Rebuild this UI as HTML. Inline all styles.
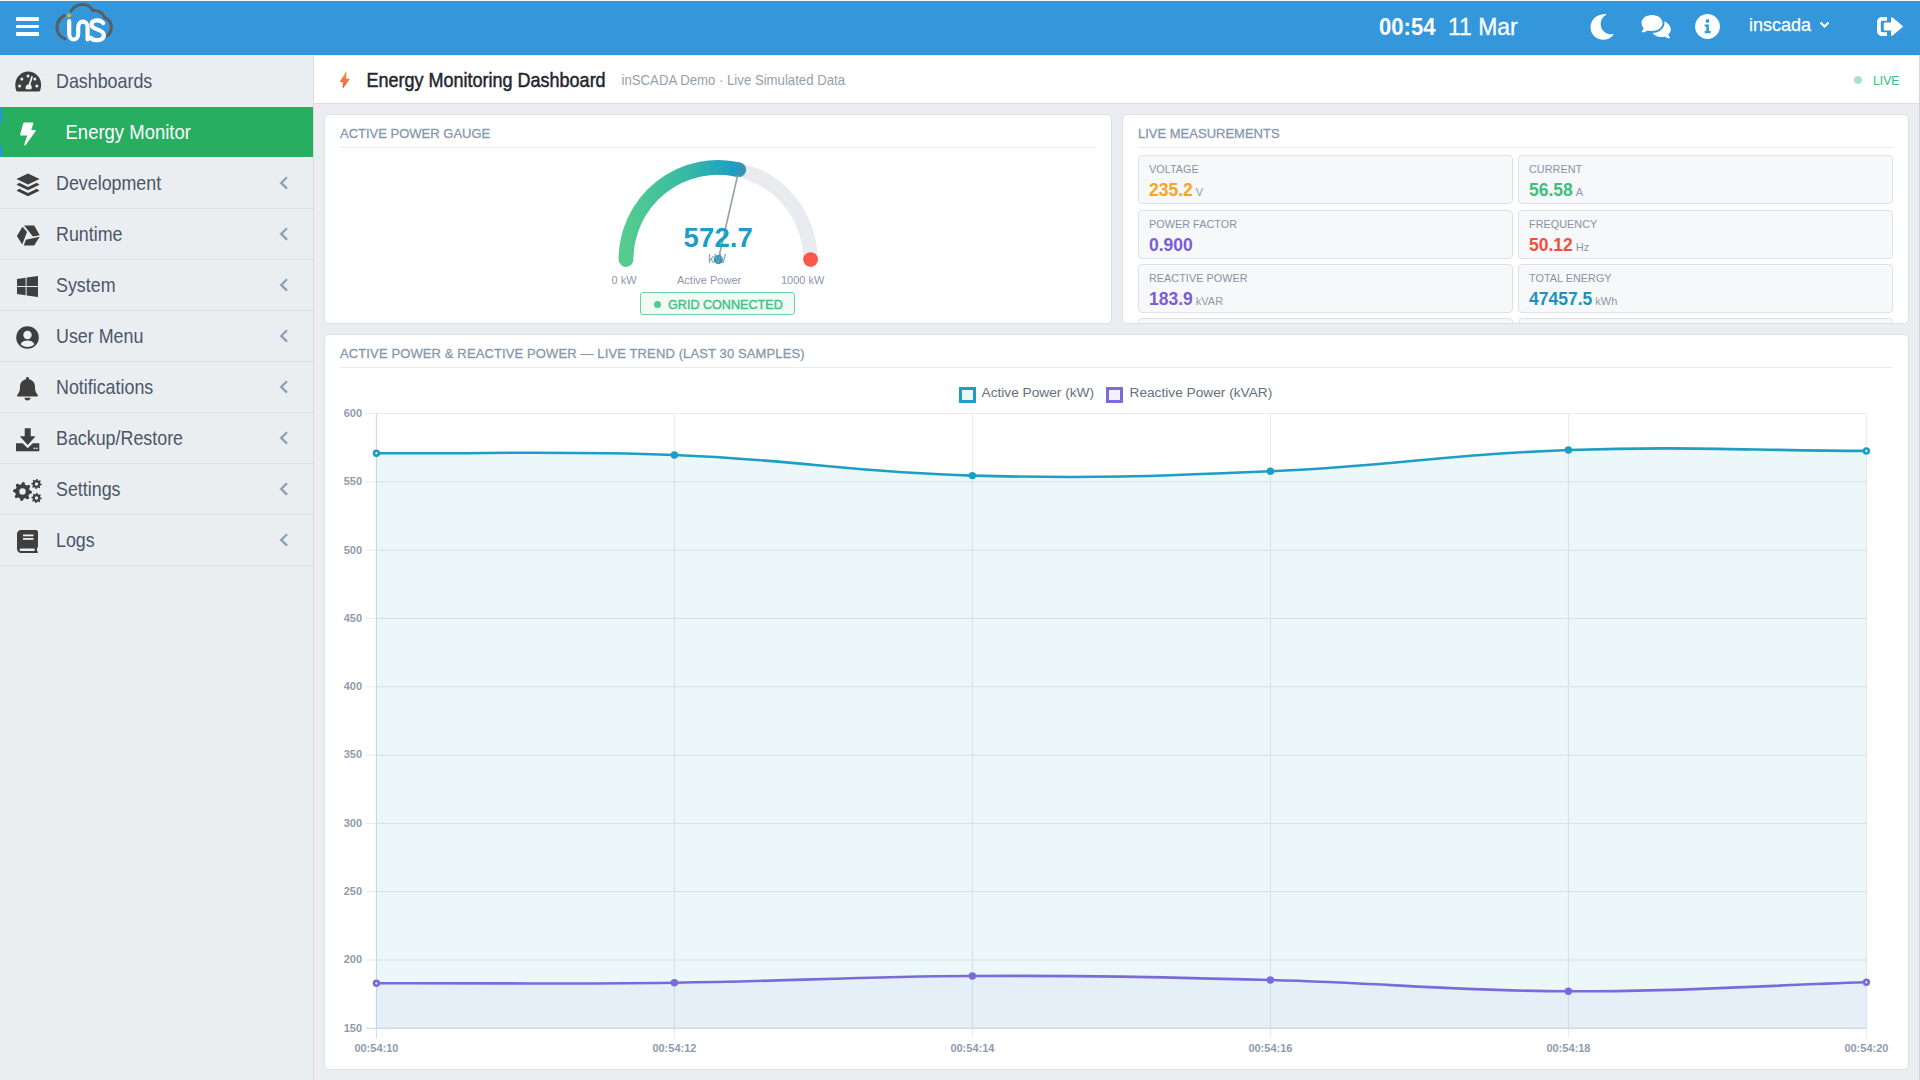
<!DOCTYPE html>
<html><head><meta charset="utf-8"><style>
*{box-sizing:border-box}
html,body{margin:0;padding:0}
body{width:1920px;height:1080px;overflow:hidden;position:relative;background:#ebedf0;font-family:"Liberation Sans",sans-serif}
.abs{position:absolute}
#hdr{position:absolute;left:0;top:1px;width:1920px;height:54px;background:#3597db;border-bottom:1px solid #2891d9}
#topline{position:absolute;left:0;top:0;width:1920px;height:1px;background:#f4f7fa}
#side{position:absolute;left:0;top:55px;width:314px;height:1025px;background:#eaeef1;border-right:1px solid #dadada}
.row{position:absolute;left:0;width:313px}
.row.active{background:#27ae60}
.lbl{position:absolute;font-size:18.5px;color:#4b5668;white-space:nowrap;transform:scale(0.965,1.1);transform-origin:0 32px}
.sep{position:absolute;left:0;width:313px;height:1px;background:#dde1e5}
.chev{position:absolute}
.ico{position:absolute;line-height:0}
#titlebar{position:absolute;left:314px;top:55px;width:1605px;height:49px;background:#fff;border-bottom:1px solid #dadde2}
#rborder{position:absolute;left:1919px;top:55px;width:1px;height:1025px;background:#d3d7dc}
.card{position:absolute;background:#fff;border:1px solid #dde1e6;border-radius:5px;overflow:hidden}
.ctitle{position:absolute;left:15px;font-size:13px;color:#8898ab;-webkit-text-stroke:0.3px #8898ab;white-space:nowrap;letter-spacing:0px}
.cdiv{position:absolute;left:15px;right:15px;height:1px;background:#e8ebef}
.mbox{position:absolute;width:375px;height:49px;background:#f7f8fa;border:1px solid #dde1e6;border-radius:4px}
.mlab{position:absolute;left:10px;top:6.7px;font-size:10.8px;color:#8893a3;white-space:nowrap;letter-spacing:0.05px}
.mval{position:absolute;left:10px;top:22.8px;font-size:17.5px;font-weight:bold;white-space:nowrap;line-height:22px}
.munit{font-size:11px;font-weight:normal;color:#8f99a8;margin-left:3px}
.ax{font-family:"Liberation Sans",sans-serif;font-size:11px;font-weight:bold;fill:#8f9bab}
.wt{position:absolute;color:#fff;white-space:nowrap}
</style></head><body>
<div id="topline"></div>
<div id="hdr"></div>
<!-- hamburger -->
<div class="abs" style="left:16px;top:17px;width:23px;height:3.7px;background:#fff;border-radius:1px"></div>
<div class="abs" style="left:16px;top:24.8px;width:23px;height:3.7px;background:#fff;border-radius:1px"></div>
<div class="abs" style="left:16px;top:32.4px;width:23px;height:3.7px;background:#fff;border-radius:1px"></div>
<!-- logo -->
<svg class="abs" style="left:0;top:0" width="130" height="56" viewBox="0 0 130 56">
 <path d="M64.2 15.6 C58 18.5 55.5 26 57.8 32 C59 35 61.5 37.5 65 38.8" fill="none" stroke="#585d62" stroke-width="3" stroke-linecap="round"/>
 <path d="M71 11 C74 6.5 78.5 4.6 83 4.6 C87.5 4.6 91 7 93 10.6 C98 9.8 103 13 104.8 17.6 C109.5 19.6 111.8 24 111.3 28.5 C111 31.5 109.5 34 107.4 35.6" fill="none" stroke="#585d62" stroke-width="3" stroke-linecap="round"/>
 <circle cx="69" cy="15.6" r="2" fill="#f6b012"/>
 <path d="M69.2 21 V33.5 C69.2 41.5 78.2 41.5 78.2 33.5 V27.5 C78.2 19.8 87.6 19.8 87.6 27.5 V39.5" fill="none" stroke="#fff" stroke-width="4.2" stroke-linecap="round"/>
 <path d="M103.2 23.2 C100.5 19 91.5 19.2 91.5 24.8 C91.5 30.2 103.8 28.6 103.8 35 C103.8 41.2 93.5 41.5 90.5 37.6" fill="none" stroke="#fff" stroke-width="4.2" stroke-linecap="round"/>
</svg>
<div class="wt" style="left:1379px;top:11.6px;font-size:24px;font-weight:bold;line-height:30px;transform:scaleX(0.92);transform-origin:0 0">00:54</div>
<div class="wt" style="left:1448px;top:11.6px;font-size:24px;line-height:30px;-webkit-text-stroke:0.3px #fff;transform:scaleX(0.955);transform-origin:0 0">11 Mar</div>
<!-- moon -->
<svg class="abs" style="left:1590px;top:13.5px" width="25" height="26" viewBox="0 0 25 26"><path d="M13.2 0.2 C6 0.6 0.5 6.4 0.5 13.2 C0.5 20.2 6.3 25.8 13.3 25.8 C17.4 25.8 21 23.9 23.4 21 C23.7 20.6 23.4 20 22.9 20.1 C22.2 20.2 21.6 20.3 20.9 20.3 C15.2 20.3 10.6 15.6 10.6 9.9 C10.6 6 12.7 2.6 15.9 0.9 C16.4 0.6 16.3 -0.1 15.7 -0.1 C14.9 0.1 14 0.1 13.2 0.2Z" fill="#fff"/></svg>
<!-- comments -->
<svg class="abs" style="left:1641px;top:14px" width="31" height="25" viewBox="0 0 31 25"><path d="M11 1 C5 1 0.5 4.6 0.5 9 C0.5 10.9 1.3 12.6 2.7 14 C2.2 15.7 1.2 17 0.8 17.5 C0.6 17.8 0.8 18.2 1.2 18.2 C3.6 18.2 5.5 17.2 6.6 16.4 C8 16.8 9.4 17 11 17 C17 17 21.5 13.4 21.5 9 C21.5 4.6 17 1 11 1Z" fill="#fff"/><path d="M23.3 7.2 C23.4 7.8 23.5 8.4 23.5 9 C23.5 14.6 18 18.8 11.6 19 C13.4 21.4 16.6 23 20.2 23 C21.4 23 22.6 22.8 23.7 22.4 C24.7 23.2 26.4 24.2 28.6 24.2 C29 24.2 29.2 23.8 29 23.5 C28.6 23 27.8 21.9 27.3 20.4 C28.8 19.1 29.8 17.4 29.8 15.5 C29.8 11.9 27.1 8.8 23.3 7.2Z" fill="#fff"/></svg>
<!-- info -->
<svg class="abs" style="left:1695px;top:14.2px" width="25" height="25" viewBox="0 0 25 25"><circle cx="12.5" cy="12.5" r="12.4" fill="#fff"/><circle cx="12.5" cy="6.9" r="1.9" fill="#3597db"/><path d="M9.6 10.4 H13.9 V17 H15.6 V19.2 H9.6 V17 H11.3 V12.6 H9.6Z" fill="#3597db"/></svg>
<div class="wt" style="left:1749px;top:13px;font-size:18px;line-height:24px;-webkit-text-stroke:0.25px #fff">inscada</div>
<svg class="abs" style="left:1819px;top:20.5px" width="11" height="8" viewBox="0 0 11 8"><path d="M1.5 1.5 L5.5 5.5 L9.5 1.5" fill="none" stroke="#fff" stroke-width="2.2"/></svg>
<!-- sign-out -->
<svg class="abs" style="left:1877px;top:17px" width="26" height="19" viewBox="0 0 26 19"><path d="M10 0 H5 C2.2 0 0 2.2 0 5 V14 C0 16.8 2.2 19 5 19 H10 V15.2 H5.2 C4.4 15.2 3.8 14.6 3.8 13.8 V5.2 C3.8 4.4 4.4 3.8 5.2 3.8 H10Z" fill="#fff"/><path d="M15.6 0.4 L25.4 8.7 C25.9 9.1 25.9 9.9 25.4 10.3 L15.6 18.6 C15 19.1 14 18.7 14 17.9 V13.6 H7.8 C7.2 13.6 6.8 13.2 6.8 12.6 V6.4 C6.8 5.8 7.2 5.4 7.8 5.4 H14 V1.1 C14 .3 15 -.1 15.6 .4Z" fill="#fff"/></svg>

<div id="side">
</div>
<div class="lbl" style="left:55.5px;top:56px;line-height:52px">Dashboards</div>
<div class="ico" style="left:14.5px;top:71.4px"><svg width="27" height="21" viewBox="0 -1 27 21"><path d="M2.6 19.4 Q1.6 19.4 1.1 18.5 C0.5 16.6 0.3 14.6 0.3 12.6 C0.3 5.5 6 -0.5 13.2 -0.5 C20.4 -0.5 26.1 5.5 26.1 12.6 C26.1 14.6 25.8 16.6 25.2 18.5 Q24.8 19.4 23.8 19.4 Z" fill="#3f3f3f"/><circle cx="13.06" cy="3.9" r="1.5" fill="#ecf0f1"/><circle cx="6.8" cy="6.9" r="1.5" fill="#ecf0f1"/><circle cx="19.8" cy="6.9" r="1.5" fill="#ecf0f1"/><circle cx="4.6" cy="14" r="1.5" fill="#ecf0f1"/><circle cx="21.9" cy="14" r="1.5" fill="#ecf0f1"/><path d="M16.4 3.9 L18 4.5 L15.5 12.4 C16.4 13 16.8 14 16.7 15.2 L16.5 17.2 H10.8 L10.6 15.6 C10.5 14 11.8 12.6 13.6 12.3 Z" fill="#ecf0f1"/></svg></div>
<div class="row active" style="top:107px;height:50px"></div>
<div class="abs" style="left:0;top:107px;width:2px;height:15.5px;background:#1f9bd0"></div><div class="abs" style="left:0;top:145px;width:2px;height:12px;background:#1f9bd0"></div>
<div class="lbl" style="left:65.5px;top:108px;line-height:50px;color:#fff;transform:scale(1,1.1);transform-origin:0 31px">Energy Monitor</div>
<div class="ico" style="left:19.5px;top:121.5px"><svg width="16" height="24" viewBox="0 0 16 24"><path d="M4.2 0.6 H12.6 C13.3 0.6 13.6 1.2 13.4 1.8 L11.2 8 H15 C15.7 8 16 8.8 15.6 9.3 L5.6 23.2 C5.1 23.9 4 23.4 4.3 22.6 L7.2 13.6 H1.2 C0.5 13.6 0.1 13 0.2 12.4 L3.2 1.4 C3.4 0.9 3.7 0.6 4.2 0.6Z" fill="#fff"/></svg></div>
<div class="lbl" style="left:55.5px;top:158px;line-height:51px">Development</div>
<div class="sep" style="top:208px"></div>
<svg class="chev" style="left:278.6px;top:176.1px" width="10" height="14" viewBox="0 0 10 14"><path d="M8 1.2 L2.2 6.9 L8 12.6" fill="none" stroke="#8fa0b3" stroke-width="2.3"/></svg>
<div class="ico" style="left:15.7px;top:172.5px"><svg width="24" height="24" viewBox="0 0 24 24"><path d="M12 0.5 L23.5 6 L12 11.5 L0.5 6 Z" fill="#3f3f3f"/><path d="M3.2 9.8 L12 14 L20.8 9.8 L23.5 11.8 L12 17.3 L0.5 11.8 Z" fill="#3f3f3f"/><path d="M3.2 15.8 L12 20 L20.8 15.8 L23.5 17.8 L12 23.3 L0.5 17.8 Z" fill="#3f3f3f"/></svg></div>
<div class="lbl" style="left:55.5px;top:209px;line-height:51px">Runtime</div>
<div class="sep" style="top:259px"></div>
<svg class="chev" style="left:278.6px;top:227.1px" width="10" height="14" viewBox="0 0 10 14"><path d="M8 1.2 L2.2 6.9 L8 12.6" fill="none" stroke="#8fa0b3" stroke-width="2.3"/></svg>
<div class="ico" style="left:14.5px;top:223.5px"><svg width="26" height="23" viewBox="14.5 223.5 26 23"><path d="M23.6 225.1 H33.7 L39.2 234.7 L32.4 235.9 Z" fill="#3f3f3f"/><path d="M22 226.3 L26.5 231.4 L21.7 244 L16.4 235.4 Z" fill="#3f3f3f"/><path d="M25.3 239.2 L39.2 236.2 L33.7 245 H23.3 Z" fill="#3f3f3f"/></svg></div>
<div class="lbl" style="left:55.5px;top:260px;line-height:51px">System</div>
<div class="sep" style="top:310px"></div>
<svg class="chev" style="left:278.6px;top:278.1px" width="10" height="14" viewBox="0 0 10 14"><path d="M8 1.2 L2.2 6.9 L8 12.6" fill="none" stroke="#8fa0b3" stroke-width="2.3"/></svg>
<div class="ico" style="left:17.2px;top:276.0px"><svg width="21" height="21" viewBox="0 0 21 21"><path d="M0 2.9 L8.6 1.7 V9.9 H0Z M9.6 1.5 L21 0 V9.9 H9.6Z M0 11 H8.6 V19.3 L0 18.1Z M9.6 11 H21 V21 L9.6 19.5Z" fill="#3f3f3f"/></svg></div>
<div class="lbl" style="left:55.5px;top:311px;line-height:51px">User Menu</div>
<div class="sep" style="top:361px"></div>
<svg class="chev" style="left:278.6px;top:329.1px" width="10" height="14" viewBox="0 0 10 14"><path d="M8 1.2 L2.2 6.9 L8 12.6" fill="none" stroke="#8fa0b3" stroke-width="2.3"/></svg>
<div class="ico" style="left:16.2px;top:326.0px"><svg width="23" height="23" viewBox="0 0 23 23"><circle cx="11.5" cy="11.5" r="11.3" fill="#3f3f3f"/><circle cx="11.5" cy="9" r="4.2" fill="#ecf0f1"/><path d="M4.6 18.3 C6 15.6 8.5 14.6 11.5 14.6 C14.5 14.6 17 15.6 18.4 18.3 C16.6 20 14.2 21 11.5 21 C8.8 21 6.4 20 4.6 18.3Z" fill="#ecf0f1"/></svg></div>
<div class="lbl" style="left:55.5px;top:362px;line-height:51px">Notifications</div>
<div class="sep" style="top:412px"></div>
<svg class="chev" style="left:278.6px;top:380.1px" width="10" height="14" viewBox="0 0 10 14"><path d="M8 1.2 L2.2 6.9 L8 12.6" fill="none" stroke="#8fa0b3" stroke-width="2.3"/></svg>
<div class="ico" style="left:17.2px;top:376.8px"><svg width="21" height="24" viewBox="0 0 21 24"><path d="M10.5 0 C11.3 0 12 .7 12 1.5 V2.3 C15.6 3 18 6 18 9.6 V11 C18 13.4 18.9 15.7 20.4 17.5 L20.7 17.9 C21.2 18.6 20.8 19.5 19.9 19.5 H1.1 C.2 19.5 -.2 18.6 .3 17.9 L.6 17.5 C2.1 15.7 3 13.4 3 11 V9.6 C3 6 5.4 3 9 2.3 V1.5 C9 .7 9.7 0 10.5 0Z M13.5 20.8 C13.5 22.5 12.2 23.6 10.5 23.6 C8.8 23.6 7.5 22.5 7.5 20.8Z" fill="#3f3f3f"/></svg></div>
<div class="lbl" style="left:55.5px;top:413px;line-height:51px">Backup/Restore</div>
<div class="sep" style="top:463px"></div>
<svg class="chev" style="left:278.6px;top:431.1px" width="10" height="14" viewBox="0 0 10 14"><path d="M8 1.2 L2.2 6.9 L8 12.6" fill="none" stroke="#8fa0b3" stroke-width="2.3"/></svg>
<div class="ico" style="left:16.3px;top:427.8px"><svg width="24" height="24" viewBox="0 0 24 24"><path d="M8.7 0.3 H14.7 V8.3 H19.6 L11.7 17 L3.8 8.3 H8.7Z" fill="#3f3f3f"/><path d="M0 15.3 H6.6 L11.7 20.2 L16.8 15.3 H23.3 V23.2 H0Z" fill="#3f3f3f"/><circle cx="18.4" cy="20.3" r=".9" fill="#ecf0f1"/><circle cx="20.8" cy="20.3" r=".9" fill="#ecf0f1"/></svg></div>
<div class="lbl" style="left:55.5px;top:464px;line-height:51px">Settings</div>
<div class="sep" style="top:514px"></div>
<svg class="chev" style="left:278.6px;top:482.1px" width="10" height="14" viewBox="0 0 10 14"><path d="M8 1.2 L2.2 6.9 L8 12.6" fill="none" stroke="#8fa0b3" stroke-width="2.3"/></svg>
<div class="ico" style="left:13.3px;top:478.5px"><svg width="29" height="24" viewBox="0 0 29 24"><path fill-rule="evenodd" d="M19.00 12.50 L18.82 14.35 L16.15 15.26 L15.49 16.50 L16.22 19.22 L14.78 20.40 L12.26 19.15 L10.90 19.56 L9.50 22.00 L7.65 21.82 L6.74 19.15 L5.50 18.49 L2.78 19.22 L1.60 17.78 L2.85 15.26 L2.44 13.90 L0.00 12.50 L0.18 10.65 L2.85 9.74 L3.51 8.50 L2.78 5.78 L4.22 4.60 L6.74 5.85 L8.10 5.44 L9.50 3.00 L11.35 3.18 L12.26 5.85 L13.50 6.51 L16.22 5.78 L17.40 7.22 L16.15 9.74 L16.56 11.10Z M6.30 12.50 a3.20 3.20 0 1 0 6.40 0 a3.20 3.20 0 1 0 -6.40 0Z M28.70 5.00 L28.60 6.01 L27.01 6.45 L26.66 7.11 L27.18 8.68 L26.39 9.32 L24.95 8.51 L24.24 8.73 L23.50 10.20 L22.49 10.10 L22.05 8.51 L21.39 8.16 L19.82 8.68 L19.18 7.89 L19.99 6.45 L19.77 5.74 L18.30 5.00 L18.40 3.99 L19.99 3.55 L20.34 2.89 L19.82 1.32 L20.61 0.68 L22.05 1.49 L22.76 1.27 L23.50 -0.20 L24.51 -0.10 L24.95 1.49 L25.61 1.84 L27.18 1.32 L27.82 2.11 L27.01 3.55 L27.23 4.26Z M21.80 5.00 a1.70 1.70 0 1 0 3.40 0 a1.70 1.70 0 1 0 -3.40 0Z M28.70 19.00 L28.60 20.01 L27.01 20.45 L26.66 21.11 L27.18 22.68 L26.39 23.32 L24.95 22.51 L24.24 22.73 L23.50 24.20 L22.49 24.10 L22.05 22.51 L21.39 22.16 L19.82 22.68 L19.18 21.89 L19.99 20.45 L19.77 19.74 L18.30 19.00 L18.40 17.99 L19.99 17.55 L20.34 16.89 L19.82 15.32 L20.61 14.68 L22.05 15.49 L22.76 15.27 L23.50 13.80 L24.51 13.90 L24.95 15.49 L25.61 15.84 L27.18 15.32 L27.82 16.11 L27.01 17.55 L27.23 18.26Z M21.80 19.00 a1.70 1.70 0 1 0 3.40 0 a1.70 1.70 0 1 0 -3.40 0Z" fill="#3f3f3f"/></svg></div>
<div class="lbl" style="left:55.5px;top:515px;line-height:51px">Logs</div>
<div class="sep" style="top:565px"></div>
<svg class="chev" style="left:278.6px;top:533.1px" width="10" height="14" viewBox="0 0 10 14"><path d="M8 1.2 L2.2 6.9 L8 12.6" fill="none" stroke="#8fa0b3" stroke-width="2.3"/></svg>
<div class="ico" style="left:17.2px;top:530.0px"><svg width="21" height="23" viewBox="0 0 21 23"><path d="M4 0 H19 C20.1 0 21 .9 21 2 V16.5 C21 17.3 20.6 17.9 20 18.2 V21 C20.6 21.2 21 21.6 21 22.2 C21 22.7 20.6 23 20 23 H4 C1.8 23 0 21.2 0 19 V4 C0 1.8 1.8 0 4 0Z M4 18.4 C3.2 18.4 2.6 19 2.6 19.7 C2.6 20.4 3.2 21 4 21 H17.6 V18.4Z" fill="#3f3f3f" fill-rule="evenodd"/><rect x="6" y="4.5" width="10.5" height="1.8" fill="#ecf0f1"/><rect x="6" y="8" width="10.5" height="1.8" fill="#ecf0f1"/></svg></div>
<div id="titlebar"></div>
<div class="abs" style="left:0;top:55px;width:1920px;height:1px;background:#eee9e6"></div>
<div id="rborder"></div>
<svg class="abs" style="left:330px;top:66px" width="30" height="30" viewBox="330 66 30 30"><defs><linearGradient id="bg1" x1="0" y1="0" x2="0" y2="1"><stop offset="0" stop-color="#f9a73a"/><stop offset="1" stop-color="#ee4a44"/></linearGradient></defs><path d="M346.2 71.6 L339.9 81.9 L343.2 81.9 L342.9 88.3 L349.6 78.9 L346.1 78.9 Z" fill="url(#bg1)" stroke="url(#bg1)" stroke-width="0.4" stroke-linejoin="round"/></svg>
<div class="abs" style="left:366.5px;top:68.5px;font-size:18px;color:#23272e;-webkit-text-stroke:0.45px #23272e;white-space:nowrap;line-height:24px;transform:scaleY(1.1);transform-origin:0 19px">Energy Monitoring Dashboard</div>
<div class="abs" style="left:621.5px;top:71px;font-size:13.2px;color:#95a0ae;white-space:nowrap;line-height:20px;transform:scaleY(1.1);transform-origin:0 14.6px">inSCADA Demo · Live Simulated Data</div>
<div class="abs" style="left:1854px;top:75.5px;width:8px;height:8px;border-radius:50%;background:#a7e5c5"></div>
<div class="abs" style="left:1872.5px;top:70.6px;font-size:13.5px;color:#3cc383;-webkit-text-stroke:0.15px #3cc383;white-space:nowrap;line-height:20px;transform:scaleX(0.9);transform-origin:0 0">LIVE</div>

<!-- card 1 -->
<div class="card" style="left:324px;top:114px;width:788px;height:210px">
 <div class="ctitle" style="top:10px;line-height:18px">ACTIVE POWER GAUGE</div>
 <div class="cdiv" style="top:32px"></div>
</div>
<svg class="abs" style="left:600px;top:150px" width="240" height="120" viewBox="600 150 240 120">
 <defs><linearGradient id="gg" gradientUnits="userSpaceOnUse" x1="626" y1="0" x2="745" y2="0"><stop offset="0" stop-color="#55cc8e"/><stop offset="0.55" stop-color="#34b7a8"/><stop offset="0.9" stop-color="#1d9ec4"/><stop offset="1" stop-color="#3a90b3"/></linearGradient></defs>
 <path d="M626 259.6 A92.2 92.2 0 0 1 810.4 259.6" fill="none" stroke="#e9ebef" stroke-width="14.5"/>
 <path d="M626 259.6 A92.2 92.2 0 0 1 738.7 169.7" fill="none" stroke="url(#gg)" stroke-width="14.8" stroke-linecap="round"/>
 <circle cx="810.6" cy="259.6" r="7.4" fill="#f8584a"/>
</svg>
<svg class="abs" style="left:600px;top:150px" width="240" height="120" viewBox="600 150 240 120">
 <line x1="718.3" y1="259.6" x2="737.6" y2="175.5" stroke="#9ba2ad" stroke-width="1.7"/>
 <circle cx="718.3" cy="259.6" r="4.6" fill="#1d9ec4"/>
</svg>
<div class="abs" style="left:683.5px;top:221px;font-size:27.6px;font-weight:bold;color:#1d9ec4;white-space:nowrap;line-height:34px;letter-spacing:0.1px">572.7</div>
<div class="abs" style="left:708px;top:251px;font-size:12.5px;color:#8d98a7;white-space:nowrap;line-height:16px">kW</div>
<div class="abs" style="left:611.5px;top:273px;font-size:11px;color:#8d98a8;white-space:nowrap;line-height:14px">0 kW</div>
<div class="abs" style="left:677px;top:273px;font-size:11px;color:#8d98a8;white-space:nowrap;line-height:14px">Active Power</div>
<div class="abs" style="left:781px;top:273px;font-size:11px;color:#8d98a8;white-space:nowrap;line-height:14px">1000 kW</div>
<div class="abs" style="left:640px;top:292px;width:155px;height:23px;border:1px solid #6fd3a1;border-radius:3px;background:#f1faf5"></div>
<div class="abs" style="left:653.8px;top:300.5px;width:7px;height:7px;border-radius:50%;background:#4ccb8b"></div>
<div class="abs" style="left:668px;top:296.8px;font-size:12.6px;color:#44c184;-webkit-text-stroke:0.45px #44c184;white-space:nowrap;line-height:16px;letter-spacing:0px">GRID CONNECTED</div>

<!-- card 2 -->
<div class="card" style="left:1122px;top:114px;width:787px;height:210px">
 <div class="ctitle" style="top:10px;line-height:18px">LIVE MEASUREMENTS</div>
 <div class="cdiv" style="top:32px"></div>
</div>
<div class="abs" style="left:1123px;top:115px;width:785px;height:208px;overflow:hidden;border-radius:5px">
 <div class="abs" style="left:-1123px;top:-115px;width:1920px;height:1080px">
 <div class="mbox" style="left:1138px;top:155px"><div class="mlab">VOLTAGE</div><div class="mval" style="color:#f5a623">235.2<span class="munit">V</span></div></div>
<div class="mbox" style="left:1518px;top:155px"><div class="mlab">CURRENT</div><div class="mval" style="color:#3dbf7f">56.58<span class="munit">A</span></div></div>
<div class="mbox" style="left:1138px;top:210px"><div class="mlab">POWER FACTOR</div><div class="mval" style="color:#7b5cd6">0.900<span class="munit"></span></div></div>
<div class="mbox" style="left:1518px;top:210px"><div class="mlab">FREQUENCY</div><div class="mval" style="color:#f0503c">50.12<span class="munit">Hz</span></div></div>
<div class="mbox" style="left:1138px;top:264px"><div class="mlab">REACTIVE POWER</div><div class="mval" style="color:#7b5cd6">183.9<span class="munit">kVAR</span></div></div>
<div class="mbox" style="left:1518px;top:264px"><div class="mlab">TOTAL ENERGY</div><div class="mval" style="color:#1a92c0">47457.5<span class="munit">kWh</span></div></div>
<div class="mbox" style="left:1138px;top:318px"><div class="mlab"></div><div class="mval" style="color:"> <span class="munit"></span></div></div>
<div class="mbox" style="left:1518px;top:318px"><div class="mlab"></div><div class="mval" style="color:"> <span class="munit"></span></div></div>
 </div>
</div>

<!-- card 3 -->
<div class="card" style="left:324px;top:334px;width:1585px;height:736px">
 <div class="ctitle" style="top:9.5px;line-height:18px;letter-spacing:0.12px">ACTIVE POWER &amp; REACTIVE POWER — LIVE TREND (LAST 30 SAMPLES)</div>
 <div class="cdiv" style="top:32px"></div>
</div>
<div class="abs" style="left:958.5px;top:386.5px;width:17px;height:16px;border:3px solid #1d9ec4;background:#e9f6fa"></div>
<div class="abs" style="left:981.5px;top:384px;font-size:13.7px;color:#66707c;white-space:nowrap;line-height:18px">Active Power (kW)</div>
<div class="abs" style="left:1106px;top:386.5px;width:17px;height:16px;border:3px solid #7a6cd8;background:#f3f1fb"></div>
<div class="abs" style="left:1129.5px;top:384px;font-size:13.7px;color:#66707c;white-space:nowrap;line-height:18px">Reactive Power (kVAR)</div>
<svg class="abs" style="left:0;top:0" width="1920" height="1080" viewBox="0 0 1920 1080">
<line x1="366" y1="413.6" x2="1866.4" y2="413.6" stroke="#e6e9ed" stroke-width="1"/>
<line x1="366" y1="481.9" x2="1866.4" y2="481.9" stroke="#e6e9ed" stroke-width="1"/>
<line x1="366" y1="550.2" x2="1866.4" y2="550.2" stroke="#e6e9ed" stroke-width="1"/>
<line x1="366" y1="618.5" x2="1866.4" y2="618.5" stroke="#e6e9ed" stroke-width="1"/>
<line x1="366" y1="686.8" x2="1866.4" y2="686.8" stroke="#e6e9ed" stroke-width="1"/>
<line x1="366" y1="755.1" x2="1866.4" y2="755.1" stroke="#e6e9ed" stroke-width="1"/>
<line x1="366" y1="823.4" x2="1866.4" y2="823.4" stroke="#e6e9ed" stroke-width="1"/>
<line x1="366" y1="891.7" x2="1866.4" y2="891.7" stroke="#e6e9ed" stroke-width="1"/>
<line x1="366" y1="960.0" x2="1866.4" y2="960.0" stroke="#e6e9ed" stroke-width="1"/>
<line x1="366" y1="1028.3" x2="1866.4" y2="1028.3" stroke="#e6e9ed" stroke-width="1"/>
<line x1="376.4" y1="413.6" x2="376.4" y2="1038" stroke="#e6e9ed" stroke-width="1"/>
<line x1="674.4" y1="413.6" x2="674.4" y2="1038" stroke="#e6e9ed" stroke-width="1"/>
<line x1="972.4" y1="413.6" x2="972.4" y2="1038" stroke="#e6e9ed" stroke-width="1"/>
<line x1="1270.4" y1="413.6" x2="1270.4" y2="1038" stroke="#e6e9ed" stroke-width="1"/>
<line x1="1568.4" y1="413.6" x2="1568.4" y2="1038" stroke="#e6e9ed" stroke-width="1"/>
<line x1="1866.4" y1="413.6" x2="1866.4" y2="1038" stroke="#e6e9ed" stroke-width="1"/>
<line x1="376.4" y1="413.6" x2="376.4" y2="1038" stroke="#d3d8de" stroke-width="1"/>
<line x1="366" y1="1028.3" x2="1866.4" y2="1028.3" stroke="#d3d8de" stroke-width="1"/>
<path d="M376.40 453.20 C495.60 453.92 555.34 450.53 674.40 455.00 C793.74 459.49 853.06 472.35 972.40 475.60 C1091.46 478.85 1151.34 476.36 1270.40 471.25 C1389.74 466.12 1449.05 454.08 1568.40 450.00 C1687.45 445.94 1747.20 450.54 1866.40 450.90 L1866.4 1028.3 L376.4 1028.3 Z" fill="rgba(23,160,184,0.085)"/>
<path d="M376.40 983.30 C495.60 983.06 555.21 984.16 674.40 982.70 C793.61 981.24 853.19 976.54 972.40 976.00 C1091.59 975.46 1151.24 976.94 1270.40 980.00 C1389.64 983.06 1449.18 990.84 1568.40 991.30 C1687.58 991.76 1747.20 985.90 1866.40 982.30 L1866.4 1028.3 L376.4 1028.3 Z" fill="rgba(123,104,238,0.05)"/>
<path d="M376.40 453.20 C495.60 453.92 555.34 450.53 674.40 455.00 C793.74 459.49 853.06 472.35 972.40 475.60 C1091.46 478.85 1151.34 476.36 1270.40 471.25 C1389.74 466.12 1449.05 454.08 1568.40 450.00 C1687.45 445.94 1747.20 450.54 1866.40 450.90" fill="none" stroke="#1d9ec4" stroke-width="2.6"/>
<path d="M376.40 983.30 C495.60 983.06 555.21 984.16 674.40 982.70 C793.61 981.24 853.19 976.54 972.40 976.00 C1091.59 975.46 1151.24 976.94 1270.40 980.00 C1389.64 983.06 1449.18 990.84 1568.40 991.30 C1687.58 991.76 1747.20 985.90 1866.40 982.30" fill="none" stroke="#7a6cd8" stroke-width="2.6"/>
<circle cx="376.4" cy="453.2" r="3.7" fill="#1d9ec4"/>
<circle cx="376.4" cy="453.2" r="1.1" fill="#e9f6f9"/>
<circle cx="674.4" cy="455.0" r="3.7" fill="#1d9ec4"/>
<circle cx="972.4" cy="475.6" r="3.7" fill="#1d9ec4"/>
<circle cx="1270.4" cy="471.2" r="3.7" fill="#1d9ec4"/>
<circle cx="1568.4" cy="450.0" r="3.7" fill="#1d9ec4"/>
<circle cx="1866.4" cy="450.9" r="3.7" fill="#1d9ec4"/>
<circle cx="1866.4" cy="450.9" r="1.1" fill="#e9f6f9"/>
<circle cx="376.4" cy="983.3" r="3.7" fill="#7a6cd8"/>
<circle cx="376.4" cy="983.3" r="1.1" fill="#e6eef8"/>
<circle cx="674.4" cy="982.7" r="3.7" fill="#7a6cd8"/>
<circle cx="972.4" cy="976.0" r="3.7" fill="#7a6cd8"/>
<circle cx="1270.4" cy="980.0" r="3.7" fill="#7a6cd8"/>
<circle cx="1568.4" cy="991.3" r="3.7" fill="#7a6cd8"/>
<circle cx="1866.4" cy="982.3" r="3.7" fill="#7a6cd8"/>
<circle cx="1866.4" cy="982.3" r="1.1" fill="#e6eef8"/>
<text x="362" y="416.9" text-anchor="end" class="ax">600</text>
<text x="362" y="485.2" text-anchor="end" class="ax">550</text>
<text x="362" y="553.5" text-anchor="end" class="ax">500</text>
<text x="362" y="621.8" text-anchor="end" class="ax">450</text>
<text x="362" y="690.1" text-anchor="end" class="ax">400</text>
<text x="362" y="758.4" text-anchor="end" class="ax">350</text>
<text x="362" y="826.7" text-anchor="end" class="ax">300</text>
<text x="362" y="895.0" text-anchor="end" class="ax">250</text>
<text x="362" y="963.3" text-anchor="end" class="ax">200</text>
<text x="362" y="1031.6" text-anchor="end" class="ax">150</text>
<text x="376.4" y="1052.4" text-anchor="middle" class="ax">00:54:10</text>
<text x="674.4" y="1052.4" text-anchor="middle" class="ax">00:54:12</text>
<text x="972.4" y="1052.4" text-anchor="middle" class="ax">00:54:14</text>
<text x="1270.4" y="1052.4" text-anchor="middle" class="ax">00:54:16</text>
<text x="1568.4" y="1052.4" text-anchor="middle" class="ax">00:54:18</text>
<text x="1866.4" y="1052.4" text-anchor="middle" class="ax">00:54:20</text>
</svg>
</body></html>
